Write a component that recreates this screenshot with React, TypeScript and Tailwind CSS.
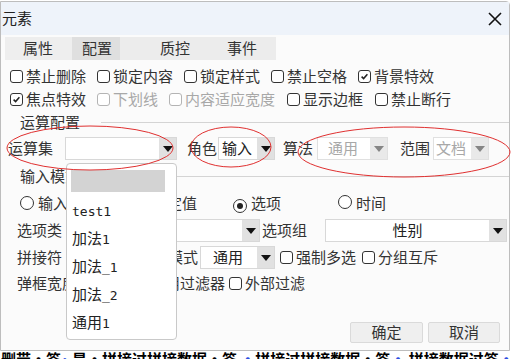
import React from "react";

const FONT = "'Noto Sans CJK SC', 'Noto Sans', sans-serif";
const MONO = "'DejaVu Sans Mono', 'Liberation Mono', monospace";

function Check({ checked = false, disabled = false }: { checked?: boolean; disabled?: boolean }) {
  return (
    <span
      className={
        disabled
          ? "inline-flex w-[13px] h-[13px] rounded-[3px] border border-[#b4b4b4] bg-white items-center justify-center mx-[3px] shrink-0"
          : "inline-flex w-[13px] h-[13px] rounded-[3px] border border-[#333] bg-white items-center justify-center mx-[3px] shrink-0"
      }
    >
      {checked && (
        <svg width="9" height="9" viewBox="0 0 9 9">
          <path d="M1.6 4.6 L3.6 6.6 L7.4 2.2" fill="none" stroke="#222" strokeWidth="1.5" />
        </svg>
      )}
    </span>
  );
}

function Radio({ checked = false }: { checked?: boolean }) {
  return (
    <span className="inline-flex w-[14px] h-[14px] rounded-full border-[1.5px] border-[#333] bg-white items-center justify-center shrink-0">
      {checked && <span className="w-[6px] h-[6px] rounded-full bg-[#222]" />}
    </span>
  );
}

function Arrow({ disabled = false }: { disabled?: boolean }) {
  return (
    <span
      className={
        disabled
          ? "flex w-[17px] h-full items-center justify-center bg-[#e9e9e9] shrink-0"
          : "flex w-[17px] h-full items-center justify-center bg-[#e1e1e1] shrink-0"
      }
    >
      <svg width="10" height="6" viewBox="0 0 10 6">
        <path d="M0 0 H10 L5 6 Z" fill={disabled ? "#858585" : "#111"} />
      </svg>
    </span>
  );
}

function Lat({ children }: { children: React.ReactNode }) {
  return (
    <span className="text-[13px]" style={{ fontFamily: MONO }}>
      {children}
    </span>
  );
}

export default function App() {
  return (
    <div
      className="relative w-[513px] h-[359px] overflow-hidden bg-white pt-[1px] text-[#333]"
      style={{ fontFamily: FONT }}
    >
      {/* dialog */}
      <div className="flex flex-col w-[510px] h-[350px] border border-[#bdbdbd] rounded-tr-[4px] bg-[#fbfbfb] text-[15px]">
        {/* title */}
        <div className="flex h-[33px] items-center justify-between pl-[1px] pr-[7px] bg-[#eef3fa] text-[#222]">
          <span className="text-[15px]">元素</span>
          <svg width="14" height="14" viewBox="0 0 14 14">
            <path d="M1 1 L13 13 M13 1 L1 13" stroke="#111" strokeWidth="1.6" />
          </svg>
        </div>

        {/* tabs */}
        <div className="flex mt-[2px] ml-[4px] h-[23px] w-[271px] bg-[#ececec] items-center">
          <div className="w-[67px] h-full flex items-center pl-[18px] bg-[#eeeeee]">属性</div>
          <div className="w-[48px] h-full flex items-center pl-[10px] bg-[#dfdfdf]">配置</div>
          <div className="w-[87px] h-full flex items-center pl-[40px]">质控</div>
          <div className="w-[69px] h-full flex items-center pl-[20px]">事件</div>
        </div>

        {/* checkbox row 1 */}
        <div className="flex mt-[5px] h-[22px] items-center pl-[6px]">
          <span className="flex items-center mr-[8px]"><Check />禁止删除</span>
          <span className="flex items-center mr-[8px]"><Check />锁定内容</span>
          <span className="flex items-center mr-[8px]"><Check />锁定样式</span>
          <span className="flex items-center mr-[8px]"><Check />禁止空格</span>
          <span className="flex items-center mr-[8px]"><Check checked />背景特效</span>
        </div>

        {/* checkbox row 2 */}
        <div className="flex mt-[1px] h-[22px] items-center pl-[6px]">
          <span className="flex items-center mr-[8px]"><Check checked />焦点特效</span>
          <span className="flex items-center mr-[8px] text-[#a8a8a8]"><Check disabled />下划线</span>
          <span className="flex items-center mr-[9px] text-[#a8a8a8]"><Check disabled />内容适应宽度</span>
          <span className="flex items-center mr-[9px]"><Check />显示边框</span>
          <span className="flex items-center mr-[8px]"><Check />禁止断行</span>
        </div>

        {/* legend 运算配置 */}
        <div className="flex mt-[1px] h-[22px] items-center pl-[19px]">
          <span>运算配置</span>
          <span className="flex-1 h-px bg-[#d4d4d4] ml-[21px]" />
        </div>

        {/* 运算集 row */}
        <div className="flex mt-[4px] h-[23px] items-center pl-[7px]">
          <span>运算集</span>
          <div className="flex ml-[12px] w-[112px] h-[23px] border border-[#d8d8d8] bg-white">
            <span className="flex-1" />
            <Arrow />
          </div>
          <span className="ml-[10px]">角色</span>
          <div className="flex ml-[1px] w-[57px] h-[23px] border border-[#d8d8d8] bg-white items-center">
            <span className="flex-1 pl-[3px] text-[#222]">输入</span>
            <Arrow />
          </div>
          <span className="ml-[8px]">算法</span>
          <div className="flex ml-[4px] w-[71px] h-[23px] border border-[#e0e0e0] bg-white items-center">
            <span className="flex-1 pl-[10px] text-[#a8a8a8]">通用</span>
            <Arrow disabled />
          </div>
          <span className="ml-[12px]">范围</span>
          <div className="flex ml-[3px] w-[56px] h-[23px] border border-[#e0e0e0] bg-white items-center">
            <span className="flex-1 pl-[2px] text-[#a8a8a8]">文档</span>
            <Arrow disabled />
          </div>
        </div>

        {/* legend 输入模式 */}
        <div className="flex mt-[5px] h-[22px] items-center pl-[19px]">
          <span>输入模式</span>
          <span className="flex-1 h-px bg-[#d4d4d4] ml-[20px]" />
        </div>

        {/* radio row */}
        <div className="flex mt-[5px] h-[22px] items-center pl-[19px]">
          <Radio />
          <span className="ml-[4px]">输入</span>
          <span className="ml-[66px]"><Radio /></span>
          <span className="ml-[4px]">固定值</span>
          <span className="ml-[36px]"><Radio checked /></span>
          <span className="ml-[4px]">选项</span>
          <span className="ml-[57px]"><Radio /></span>
          <span className="ml-[4px]">时间</span>
        </div>

        {/* 选项类型 row */}
        <div className="flex mt-[5px] h-[23px] items-center pl-[16px]">
          <span>选项类</span>
          <div className="flex ml-[33px] w-[165px] h-[23px] border border-[#d8d8d8] bg-white">
            <span className="flex-1" />
            <Arrow />
          </div>
          <span className="ml-[2px]">选项组</span>
          <div className="flex ml-[18px] w-[182px] h-[23px] border border-[#d8d8d8] bg-white items-center">
            <span className="flex-1 text-center text-[#222]">性别</span>
            <Arrow />
          </div>
        </div>

        {/* 拼接符 row */}
        <div className="flex mt-[4px] h-[23px] items-center pl-[16px]">
          <span>拼接符</span>
          <div className="ml-[23px] w-[45px] h-[23px] border border-[#d8d8d8] bg-white" />
          <span className="ml-[8px]">显示模式</span>
          <div className="flex ml-[2px] w-[75px] h-[23px] border border-[#d8d8d8] bg-white items-center">
            <span className="flex-1 pl-[12px] text-[#222]">通用</span>
            <Arrow />
          </div>
          <span className="flex items-center ml-[2px]"><Check />强制多选</span>
          <span className="flex items-center ml-[3px]"><Check />分组互斥</span>
        </div>

        {/* 弹框宽度 row */}
        <div className="flex mt-[3px] h-[22px] items-center pl-[16px]">
          <span>弹框宽度</span>
          <div className="ml-[8px] w-[45px] h-[22px] border border-[#d8d8d8] bg-white" />
          <span className="flex items-center ml-[1px]"><Check />启用过滤器</span>
          <span className="flex items-center ml-[1px]"><Check />外部过滤</span>
        </div>

        {/* buttons */}
        <div className="flex mt-auto mb-[7px] justify-end pr-[9px] gap-[5px]">
          <button className="w-[73px] h-[21px] flex items-center justify-center bg-[#efefef] border border-[#dadada] rounded-[2px] text-[15px] text-[#333]">
            确定
          </button>
          <button className="w-[72px] h-[21px] flex items-center justify-center bg-[#efefef] border border-[#dadada] rounded-[2px] text-[15px] text-[#333]">
            取消
          </button>
        </div>
      </div>

      {/* page content behind the dialog (bottom strip) */}
      <div className="whitespace-nowrap text-[15px] font-bold leading-[16px] text-black pl-[1px]">
        删带·签<span className="text-[#2a4de0]">˙</span> 是·拼接过拼接数据·签 <span className="text-[#2a4de0]">·</span>拼接过拼接数据·签<span className="text-[#2a4de0]">·</span> 拼接数据过签<span className="text-[#2a4de0]">·</span>
      </div>

      {/* dropdown list overlay */}
      <div className="absolute left-[66px] top-[163px] w-[111px] h-[177px] rounded-[4px] border border-[#c9c9c9] bg-white text-[15px] text-[#222]">
        <div className="ml-[4px] mt-[6px] w-[94px] h-[22px] bg-[#d3d3d3]" />
        <div className="mt-[4px] h-[28px] flex items-center pl-[5px]"><span><Lat>test1</Lat></span></div>
        <div className="h-[28px] flex items-center pl-[5px]"><span>加法<Lat>1</Lat></span></div>
        <div className="h-[28px] flex items-center pl-[5px]"><span>加法<Lat>_1</Lat></span></div>
        <div className="h-[28px] flex items-center pl-[5px]"><span>加法<Lat>_2</Lat></span></div>
        <div className="h-[28px] flex items-center pl-[5px]"><span>通用<Lat>1</Lat></span></div>
      </div>

      {/* red annotation ellipses */}
      <svg className="absolute left-0 top-0 pointer-events-none" width="513" height="359">
        <ellipse cx="90" cy="148" rx="83" ry="22" fill="none" stroke="#e03030" strokeWidth="1" />
        <ellipse cx="231" cy="147" rx="40" ry="20" fill="none" stroke="#e03030" strokeWidth="1" />
        <ellipse cx="404" cy="152" rx="106" ry="25" fill="none" stroke="#e03030" strokeWidth="1" />
      </svg>
    </div>
  );
}
